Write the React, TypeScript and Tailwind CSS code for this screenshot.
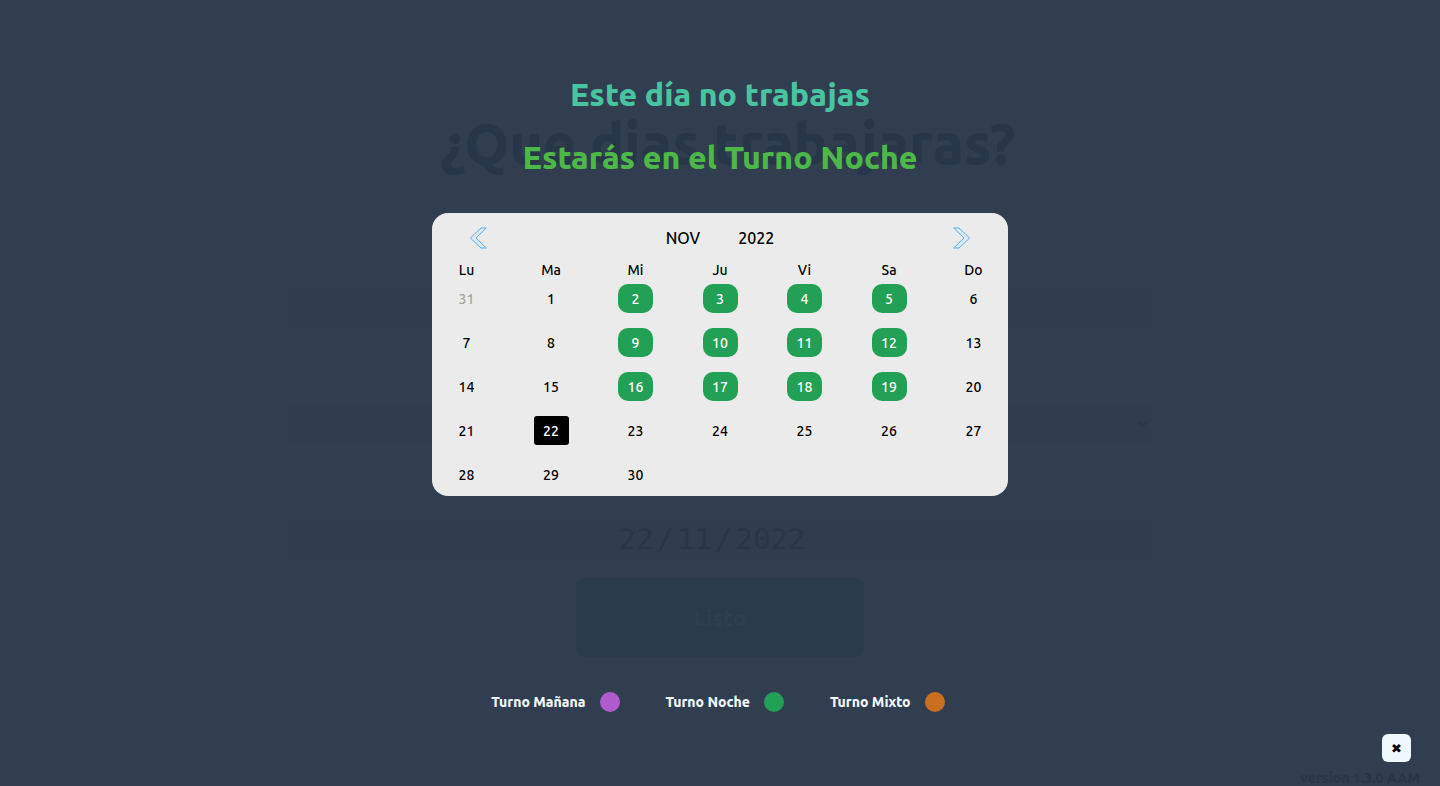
import React from "react";

type Day = { label: string; kind?: "night" | "today" | "outside" };

const WEEKDAYS = ["Lu", "Ma", "Mi", "Ju", "Vi", "Sa", "Do"];

const LEGEND = [
  { name: "Turno Mañana", color: "bg-[#b05ccf]" },
  { name: "Turno Noche", color: "bg-[#22a055]" },
  { name: "Turno Mixto", color: "bg-[#c96f1e]" },
];

const DAY_STYLE = {
  plain: "text-black",
  outside: "text-[#a3a3a3]",
  night: "rounded-[10px] bg-[#22a055] text-white",
  today: "rounded-[3px] bg-black text-white",
};

function kindOf(day: number): Day["kind"] {
  if (day === 22) return "today";
  const column = day % 7;
  return day < 20 && column >= 2 && column <= 5 ? "night" : undefined;
}

function buildWeeks(): Day[][] {
  const days: Day[] = [{ label: "31", kind: "outside" }];
  for (let d = 1; d <= 30; d++) days.push({ label: String(d), kind: kindOf(d) });
  while (days.length % 7) days.push({ label: "" });
  const weeks: Day[][] = [];
  for (let i = 0; i < days.length; i += 7) weeks.push(days.slice(i, i + 7));
  return weeks;
}

function Chevron({ flip = false }: { flip?: boolean }) {
  return (
    <svg
      viewBox="0 0 18 22"
      className={flip ? "h-[22px] w-[18px] -scale-x-100" : "h-[22px] w-[18px]"}
      fill="#dde8f0"
      stroke="#5badea"
      strokeWidth="1"
      aria-hidden="true"
    >
      <path d="M12 1 H17.3 L7 11 L17.3 21 H12 L1.3 11 Z" />
    </svg>
  );
}

function ShiftForm() {
  return (
    <form className="flex flex-col items-center text-[#273648]" onSubmit={(e) => e.preventDefault()}>
      <h1 className="mt-[103px] pl-4 text-[57px] leading-20 font-extrabold">¿Que dias trabajaras?</h1>
      <input aria-label="Nombre" className="mt-[107px] h-[38px] w-3/5 bg-[#303d4e]" />
      <div className="mt-[77px] flex h-[38px] w-3/5 items-center bg-[#303d4e]">
        <select aria-label="Turno" className="h-full w-full appearance-none bg-transparent" />
        <svg viewBox="0 0 10 7" className="mr-1 h-[7px] w-[10px] shrink-0" fill="none" stroke="#283a4a" strokeWidth="2" aria-hidden="true">
          <path d="M1 1 L5 5 L9 1" />
        </svg>
      </div>
      <div
        role="group"
        aria-label="Fecha"
        className="mt-[77px] flex h-[38px] w-3/5 items-center justify-center gap-[3px] bg-[#303d4e] pr-4 font-['DejaVu_Sans_Mono',monospace] text-[29px] leading-9"
      >
        <input aria-label="Día" defaultValue="22" className="w-[35px]" />
        <span>/</span>
        <input aria-label="Mes" defaultValue="11" className="w-[35px]" />
        <span>/</span>
        <input aria-label="Año" defaultValue="2022" className="w-[70px]" />
      </div>
      <button type="submit" className="mt-5 h-[79px] w-1/5 rounded-lg bg-[#2a3b4c] text-[22px] font-extrabold text-[#313e4f]">
        Listo
      </button>
      <footer className="mt-[111px] h-[18px] self-end overflow-hidden pr-5 text-sm leading-5 font-extrabold">version 1.3.0 AAM</footer>
    </form>
  );
}

function Calendar() {
  return (
    <section className="mt-9 w-2/5 rounded-2xl bg-[#ebebeb] px-[17px] pt-3 pb-[7px] font-medium text-black">
      <div className="flex h-[26px] items-center justify-between px-5">
        <button aria-label="Mes anterior"><Chevron /></button>
        <div className="flex gap-[38px] text-base leading-6">
          <span>NOV</span>
          <span>2022</span>
        </div>
        <button aria-label="Mes siguiente"><Chevron flip /></button>
      </div>
      <table className="mt-2 block text-sm leading-[22px]">
        <thead className="block">
          <tr className="flex justify-between">
            {WEEKDAYS.map((d) => (
              <th key={d} className="h-[25px] w-[35px] p-0 text-center font-medium">{d}</th>
            ))}
          </tr>
        </thead>
        <tbody className="flex flex-col gap-[15px]">
          {buildWeeks().map((week, i) => (
            <tr key={i} className="flex justify-between">
              {week.map((day, j) => (
                <td key={j} className={`flex h-[29px] w-[35px] items-center justify-center ${DAY_STYLE[day.kind ?? "plain"]}`}>
                  {day.label}
                </td>
              ))}
            </tr>
          ))}
        </tbody>
      </table>
    </section>
  );
}

function ShiftDialog() {
  return (
    <div role="dialog" aria-label="Calendario de turnos" className="absolute inset-0 flex flex-col items-center">
      <h2 className="mt-[74px] text-[32px] leading-10 font-extrabold text-[#48c4a1]">Este día no trabajas</h2>
      <h2 className="mt-[23px] text-[32px] leading-10 font-extrabold text-[#4db848]">Estarás en el Turno Noche</h2>
      <Calendar />
      <ul className="mt-[196px] flex gap-[46px] pr-1">
        {LEGEND.map((item) => (
          <li key={item.name} className="flex items-center gap-[14px] text-sm leading-5 font-extrabold text-[#f0f8ff]">
            {item.name}
            <span className={`size-5 rounded-full ${item.color}`} />
          </li>
        ))}
      </ul>
      <button
        aria-label="Cerrar"
        className="mt-[22px] mr-[29px] flex h-7 w-[29px] items-center justify-center self-end rounded-md bg-[#f0f8ff] pt-px font-['DejaVu_Sans',sans-serif] text-[13px] font-bold text-black"
      >
        ✖
      </button>
    </div>
  );
}

export default function App() {
  return (
    <main className="relative min-h-screen bg-[#313e4f] font-['Ubuntu','Noto_Sans',sans-serif]">
      <ShiftForm />
      <ShiftDialog />
    </main>
  );
}
